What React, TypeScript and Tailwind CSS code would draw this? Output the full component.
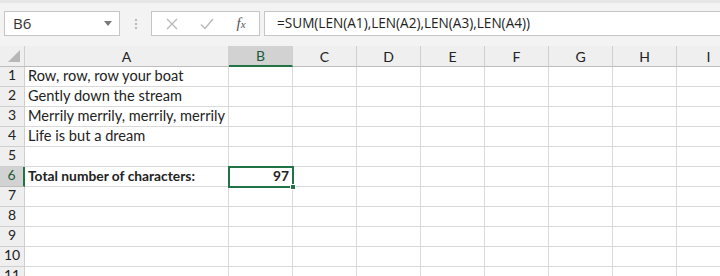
import React from 'react';

const cols = [
  { key: 'A', w: 204 },
  { key: 'B', w: 64 },
  { key: 'C', w: 64 },
  { key: 'D', w: 64 },
  { key: 'E', w: 64 },
  { key: 'F', w: 64 },
  { key: 'G', w: 64 },
  { key: 'H', w: 64 },
  { key: 'I', w: 64 },
];

const data: Record<number, { a?: string; b?: string; bold?: boolean }> = {
  1: { a: 'Row, row, row your boat' },
  2: { a: 'Gently down the stream' },
  3: { a: 'Merrily merrily, merrily, merrily' },
  4: { a: 'Life is but a dream' },
  6: { a: 'Total number of characters:', b: '97', bold: true },
};

const cellFont = { fontFamily: 'Lato, "Open Sans", sans-serif' };

export default function App() {
  return (
    <div className="relative w-[720px] h-[276px] overflow-hidden bg-white text-[#222]" style={cellFont}>
      {/* Formula bar strip */}
      <div className="h-[46px] bg-[#f3f3f3] border-t-[3px] border-[#e6e6e6] flex items-start pt-[8px] pl-[4px]">
        <div className="w-[116px] h-[25px] bg-white border border-[#c6c6c6] flex items-center justify-between pl-[8px] pr-[7px]">
          <span className="text-[15px] text-[#333]" style={{ fontFamily: '"Open Sans", sans-serif' }}>B6</span>
          <svg width="8" height="5" viewBox="0 0 8 5"><path d="M0 0h8L4 5z" fill="#7a7a7a" /></svg>
        </div>
        <div className="w-[31px] h-[25px] flex flex-col items-center justify-center gap-[2px]">
          <span className="w-[2px] h-[2px] bg-[#b8b8b8]" />
          <span className="w-[2px] h-[2px] bg-[#b8b8b8]" />
          <span className="w-[2px] h-[2px] bg-[#b8b8b8]" />
        </div>
        <div className="w-[109px] h-[25px] bg-white border border-[#c6c6c6] flex items-center">
          <div className="w-[37px] flex justify-center pl-[2px]">
            <svg width="12" height="12" viewBox="0 0 12 12"><path d="M1 1l10 10M11 1L1 11" stroke="#b9b9b9" strokeWidth="1.3" /></svg>
          </div>
          <div className="w-[34px] flex justify-center pl-[2px]">
            <svg width="14" height="12" viewBox="0 0 14 12"><path d="M1 6.5l4 4L13 1" stroke="#b9b9b9" strokeWidth="1.4" fill="none" /></svg>
          </div>
          <div className="w-[36px] flex justify-center">
            <span className="italic text-[15px] text-[#555]" style={{ fontFamily: '"Liberation Serif", serif' }}>
              f<span className="text-[11px]">x</span>
            </span>
          </div>
        </div>
        <div className="ml-[4px] flex-1 h-[25px] bg-white border border-[#c6c6c6] border-r-0 flex items-center pl-[12px]">
          <span className="text-[13.6px] text-[#222]" style={{ fontFamily: '"Open Sans", sans-serif' }}>
            =SUM(LEN(A1),LEN(A2),LEN(A3),LEN(A4))
          </span>
        </div>
      </div>

      {/* Column headers */}
      <div className="flex h-[21px] bg-[#efefef] border-b border-[#bdbdbd]">
        <div className="w-[25px] shrink-0 border-r border-[#cfcfcf] relative">
          <svg className="absolute right-[4px] bottom-[4px]" width="12" height="12" viewBox="0 0 12 12">
            <path d="M12 0v12H0z" fill="#b7b7b7" />
          </svg>
        </div>
        {cols.map((c) => (
          <div
            key={c.key}
            className={
              c.key === 'B'
                ? 'shrink-0 bg-[#d2d2d2] border-r border-[#cfcfcf] border-b-2 border-b-[#217346] flex items-center justify-center text-[14px] text-[#1e5a3a] -mb-px'
                : 'shrink-0 border-r border-[#cfcfcf] flex items-center justify-center text-[14px] text-[#222]'
            }
            style={{ width: c.w }}
          >
            {c.key}
          </div>
        ))}
      </div>

      {/* Rows */}
      {Array.from({ length: 11 }, (_, i) => i + 1).map((r) => {
        const row = data[r] || {};
        const sel = r === 6;
        return (
          <div key={r} className="flex h-[20px]">
            <div
              className={
                sel
                  ? 'w-[25px] shrink-0 bg-[#d2d2d2] border-r-2 border-r-[#217346] border-b border-[#bdbdbd] flex items-end justify-center pb-[1px] text-[14px] text-[#1e5a3a]'
                  : 'w-[25px] shrink-0 bg-[#efefef] border-r border-[#cfcfcf] border-b border-[#cfcfcf] flex items-end justify-center pb-[1px] text-[14px] text-[#222]'
              }
            >
              {r}
            </div>
            {cols.map((c) => (
              <div
                key={c.key}
                className={
                  'shrink-0 border-r border-b border-[#d9d9d9] flex items-end px-[3px] pb-[2px] leading-[17px] whitespace-nowrap ' +
                  (c.key === 'B' ? 'justify-end ' : '') +
                  (row.bold ? 'font-bold text-[13.8px] ' : 'text-[14.6px] ')
                }
                style={{ width: c.w }}
              >
                {c.key === 'A' ? row.a : c.key === 'B' ? row.b : null}
              </div>
            ))}
          </div>
        );
      })}

      {/* Active cell B6 */}
      <div className="absolute left-[228px] top-[166px] w-[66px] h-[22px] border-2 border-[#217346] pointer-events-none">
        <div className="absolute -right-[4px] -bottom-[4px] w-[6px] h-[6px] bg-[#217346] border border-white" />
      </div>
    </div>
  );
}
